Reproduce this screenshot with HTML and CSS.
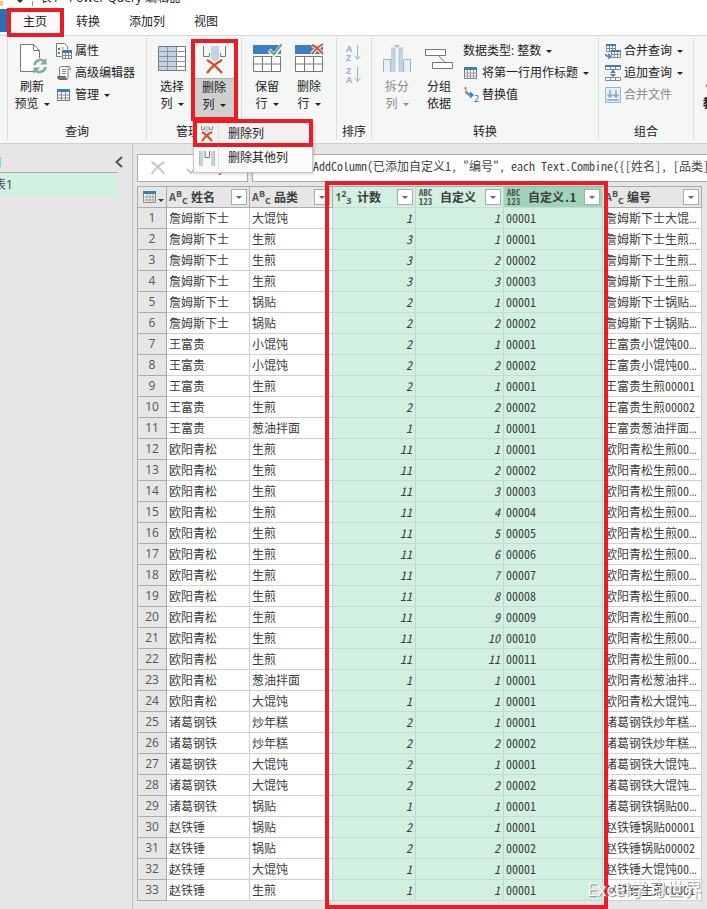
FILE: index.html
```html
<!DOCTYPE html>
<html lang="zh-CN">
<head>
    <meta charset="UTF-8">
    <meta name="viewport" content="width=device-width, initial-scale=1.0">
    <title>表1 - Power Query 编辑器</title>
    <link rel="stylesheet" href="styles.css">
</head>
<body>
    <header class="titlebar">
        <span class="title-icon"></span>
        <span class="title-caret"></span>
        <span class="title-sep"></span>
        <span class="title-text">表1 - Power Query 编辑器</span>
    </header>

    <nav class="tabs">
        <button class="tab-file" type="button" aria-label="文件"></button>
        <button class="tab tab-active" type="button">主页</button>
        <button class="tab" type="button">转换</button>
        <button class="tab" type="button">添加列</button>
        <button class="tab" type="button">视图</button>
    </nav>

    <div class="ribbon">
        <section class="group group-query">
            <div class="group-body">
                <button class="big big-wide" type="button">
                    <span class="big-icon"><svg width="30" height="32" viewBox="0 0 30 32"><path d="M3.500 2.500h13l6 6v21h-19z" fill="#fff" stroke="#777"/><path d="M16.500 2.500v6h6" fill="none" stroke="#777"/><circle cx="23" cy="24" r="8" fill="#f5f6f6"/><path d="M17.500 23a6 6 0 0 1 10-3.500M28.500 25a6 6 0 0 1-10 3.500" fill="none" stroke="#7fae9b" stroke-width="2.500"/><path d="M29.500 16v6.500h-6.500zM16.500 32v-6.500h6.500z" fill="#7fae9b"/></svg></span>
                    <span class="big-label">刷新<br>预览<i class="caret"></i></span>
                </button>
                <div class="stack">
                    <button class="small" type="button"><svg width="16" height="16" viewBox="0 0 16 16"><path d="M.5.500h8l3 3v3M.500.500v13h5" fill="#fff" stroke="#777"/><path d="M2 5h2v2H2zM2 9h2v2H2z" fill="#777"/><path d="M5 5h3" stroke="#999"/><path d="M6.500 7.500h9v8h-9z" fill="#fff" stroke="#777"/><path d="M6 7h10v3H6z" fill="#3c7fbf"/><path d="M9.500 10v6M12.500 10v6M6 12.500h10" stroke="#888"/></svg>属性</button>
                    <button class="small" type="button"><svg width="16" height="16" viewBox="0 0 16 16"><path d="M3.500 11V3.500q0-2 2-2h8q-1.500.500-1.500 2v9q0 2-2 2" fill="#fff" stroke="#777"/><path d="M12.500 1.500q2 0 2 3h-2" fill="#fff" stroke="#777"/><path d="M1.500 11.500h8q0 3 1.500 3h-7q-2.500 0-2.500-3z" fill="#777" stroke="#666"/><path d="M6 4.500h4M6 6.500h4M6 8.500h4" stroke="#888"/></svg>高级编辑器</button>
                    <button class="small" type="button"><svg width="16" height="16" viewBox="0 0 16 16"><path d="M1.500 2.500h12v11h-12z" fill="#fff" stroke="#777"/><path d="M1 2h13v3H1z" fill="#3c7fbf"/><path d="M5.500 5v9M9.500 5v9M1 8h13M1 11h13" stroke="#888"/></svg>管理<i class="caret"></i></button>
                </div>
            </div>
            <h2 class="group-name">查询</h2>
        </section>

        <section class="group group-columns">
            <div class="group-body">
                <button class="big" type="button">
                    <span class="big-icon"><svg width="30" height="32" viewBox="0 0 30 32"><path d="M1.500 4.500h27v24h-27z" fill="#fff" stroke="#777"/><path d="M2 5h17.500v23H2z" fill="#c3d3e6"/><path d="M10.500 5v24M19.500 5v24M1 9.500h28M1 14.500h28M1 19.500h28M1 24.500h28" stroke="#909090"/></svg></span>
                    <span class="big-label">选择<br>列<i class="caret"></i></span>
                </button>
                <div class="split">
                    <button class="big big-open" type="button">
                        <span class="big-icon"><svg width="30" height="32" viewBox="0 0 30 32"><path d="M12 4h8v13l-4 3-4-3z" fill="#c3d3e6"/><path d="M4.500 4v10.500h6V11M26.500 4v10.500h-5V11" fill="none" stroke="#777"/><path d="M8 18q6 3 15 13M23 18q-9 5-15 13" fill="none" stroke="#d4502a" stroke-width="2.500"/></svg></span>
                        <span class="big-label">删除<br>列<i class="caret"></i></span>
                    </button>
                    <div class="menu">
                        <button class="menu-item menu-item-marked" type="button"><span class="menu-icon"><svg width="16" height="18" viewBox="0 0 16 18"><path d="M6 1h4v6H6z" fill="#c3d3e6"/><path d="M2.500 1v3.500h3V2M13.500 1v3.500h-3V2" fill="none" stroke="#888"/><path d="M3 7q4 2 10 9M13 7q-6 3-10 9" fill="none" stroke="#d4502a" stroke-width="2"/></svg></span>删除列</button>
                        <button class="menu-item" type="button"><span class="menu-icon"><svg width="16" height="18" viewBox="0 0 16 18"><path d="M0 2h4v15H0zM12 2h4v15h-4z" fill="#c3d3e6"/><path d="M.5 2v15M15.500 2v15" stroke="#a9bdd6"/><path d="M6 2v6.500h4.500V2" fill="none" stroke="#777"/></svg></span>删除其他列</button>
                    </div>
                </div>
            </div>
            <h2 class="group-name">管理列</h2>
        </section>

        <section class="group group-rows">
            <div class="group-body">
                <button class="big" type="button">
                    <span class="big-icon"><svg width="30" height="32" viewBox="0 0 30 32"><path d="M1 3h28v9H1z" fill="#3c7fbf"/><path d="M1.500 14.500h27v15h-27z" fill="#fff" stroke="#777"/><path d="M10.500 14v16M19.500 14v16M1 22h28" stroke="#777"/><path d="M17 8l5 5 8-10" fill="none" stroke="#f5f6f6" stroke-width="4"/><path d="M17 8l5 4 8-10" fill="none" stroke="#6f9f8c" stroke-width="2"/></svg></span>
                    <span class="big-label">保留<br>行<i class="caret"></i></span>
                </button>
                <button class="big" type="button">
                    <span class="big-icon"><svg width="30" height="32" viewBox="0 0 30 32"><path d="M1 3h28v9H1z" fill="#3c7fbf"/><path d="M1.500 14.500h27v15h-27z" fill="#fff" stroke="#777"/><path d="M10.500 14v16M19.500 14v16M1 22h28" stroke="#777"/><path d="M18 3q5 2 11 9M29 2q-7 4-11 10" fill="none" stroke="#f5f6f6" stroke-width="4"/><path d="M18 3q5 2 11 9M29 2q-7 4-11 10" fill="none" stroke="#d4502a" stroke-width="2"/></svg></span>
                    <span class="big-label">删除<br>行<i class="caret"></i></span>
                </button>
            </div>
            <h2 class="group-name"></h2>
        </section>

        <section class="group group-sort">
            <div class="group-body">
                <div class="stack">
                    <button class="sort" type="button" aria-label="升序"><span>A<br>Z</span><svg width="7" height="16" viewBox="0 0 7 16"><path d="M3.500 0v14M.500 10.500l3 4 3-4" fill="none" stroke="#9fb0cb"/></svg></button>
                    <button class="sort" type="button" aria-label="降序"><span>Z<br>A</span><svg width="7" height="16" viewBox="0 0 7 16"><path d="M3.500 0v14M.500 10.500l3 4 3-4" fill="none" stroke="#9fb0cb"/></svg></button>
                </div>
            </div>
            <h2 class="group-name">排序</h2>
        </section>

        <section class="group group-transform">
            <div class="group-body">
                <button class="big" type="button" disabled>
                    <span class="big-icon"><svg width="30" height="32" viewBox="0 0 30 32"><path d="M1.500 30V17.500h7V30M28.500 30V17.500h-7V30" fill="#e4f1f8" stroke="#9db3cc"/><path d="M9 30V6h4v24M17 30V6h4v24" fill="#c3d3e6"/><path d="M9 6h4v24M17 30V6h4" fill="none" stroke="#b3c5dc"/><path d="M12 3h6l-3 3z" fill="#9db3cc"/></svg></span>
                    <span class="big-label">拆分<br>列<i class="caret"></i></span>
                </button>
                <button class="big" type="button">
                    <span class="big-icon"><svg width="30" height="32" viewBox="0 0 30 32"><path d="M1.500 7.500h20v6h-20zM8.500 20.500h20v6h-20z" fill="#fff" stroke="#777"/><path d="M14.500 14l6.500 6" stroke="#777"/></svg></span>
                    <span class="big-label">分组<br>依据</span>
                </button>
                <div class="stack">
                    <button class="small" type="button">数据类型: 整数<i class="caret"></i></button>
                    <button class="small" type="button"><svg width="16" height="16" viewBox="0 0 16 16"><path d="M1.500 2.500h12v11h-12z" fill="#fff" stroke="#777"/><path d="M1 2h13v3H1z" fill="#3c7fbf"/><path d="M4.500 5v9M7.500 5v9M10.500 5v9M1 8h13M1 11h13" stroke="#999"/></svg>将第一行用作标题<i class="caret"></i></button>
                    <button class="small" type="button"><span class="replace-icon"><sup>1</sup><svg width="9" height="8" viewBox="0 0 9 8"><path d="M1 0q0 4 6 4M4.500 1l3 3-3 3" fill="none" stroke="#3c7fbf" stroke-width="2"/></svg><sub>2</sub></span>替换值</button>
                </div>
            </div>
            <h2 class="group-name">转换</h2>
        </section>

        <section class="group group-combine">
            <div class="group-body">
                <div class="stack">
                    <button class="small" type="button"><svg width="16" height="16" viewBox="0 0 16 16"><path d="M1.500 1.500h9v7h-9z" fill="#fff" stroke="#888"/><path d="M1 1h10v2H1z" fill="#3c7fbf"/><path d="M4.500 3v6M7.500 3v6M1 5.500h10" stroke="#888"/><path d="M6.500 7.500h9v7h-9z" fill="#fff" stroke="#888"/><path d="M6 7h10v2H6z" fill="#3c7fbf"/><path d="M9.500 9v6M12.500 9v6M6 11.500h10" stroke="#888"/><path d="M.5 11q0 2.500 4.500 2.500M3 11l2.500 2.500L3 16" fill="none" stroke="#3c7fbf" stroke-width="1.500"/></svg>合并查询<i class="caret"></i></button>
                    <button class="small" type="button"><svg width="16" height="16" viewBox="0 0 16 16"><path d="M.5 1.500h15v3H.500zM.500 12.500h15v3H.500z" fill="#fff" stroke="#888"/><path d="M0 0h16v2H0z" fill="#3c7fbf"/><path d="M5.500 2v3M10.500 2v3M5.500 12v4M10.500 12v4" stroke="#888"/><path d="M8 5v2M8 9v2" stroke="#3c7fbf" stroke-width="2"/><path d="M5 8h6L8 5zM5 9h6l-3 3z" fill="#3c7fbf"/></svg>追加查询<i class="caret"></i></button>
                    <button class="small" type="button" disabled><svg width="16" height="16" viewBox="0 0 16 16"><path d="M.5.500h15v15H.500z" fill="#e4f1f8" stroke="#9db3cc"/><path d="M5 3v7M2.500 7.500L5 10l2.500-2.500M11 3v7M8.500 7.500L11 10l2.500-2.500M2 13h12" fill="none" stroke="#86a3c5" stroke-width="1.500"/></svg>合并文件</button>
                </div>
            </div>
            <h2 class="group-name">组合</h2>
        </section>

        <section class="group group-more">
            <div class="group-body">
                <button class="more" type="button"><span class="more-icon"></span>教</button>
            </div>
        </section>
    </div>

    <main class="workspace">
        <aside class="queries">
            <div class="queries-head">
                <span class="queries-mark"></span>
                <button class="collapse" type="button" aria-label="折叠"><svg width="8" height="12" viewBox="0 0 8 12"><path d="M7 1L1.500 6 7 11" fill="none" stroke="#555" stroke-width="2"/></svg></button>
            </div>
            <a class="query" href="#">表1</a>
        </aside>

        <div class="editor">
            <div class="formula">
                <div class="formula-tools">
                    <button type="button" aria-label="取消"><svg width="16" height="16" viewBox="0 0 16 16"><path d="M1.500 2Q7 5 14.500 14M14.500 2Q7 6 1.500 14" fill="none" stroke="#c8c8c8" stroke-width="2"/></svg></button>
                    <button type="button" aria-label="确认"><svg width="14" height="14" viewBox="0 0 14 14"><path d="M1 8l4 4L13 2" fill="none" stroke="#c8c8c8" stroke-width="2"/></svg></button>
                    <span class="fx">fx</span>
                </div>
                <input class="formula-input" type="text" aria-label="公式" value='= Table.AddColumn(已添加自定义1, "编号", each Text.Combine({[姓名], [品类], [自定义.1]}))'>
            </div>

            <div class="grid-wrap">
                <table class="grid">
                    <colgroup><col class="c-num"><col class="c-name"><col class="c-kind"><col class="c-count"><col class="c-custom"><col class="c-custom1"><col class="c-code"></colgroup>
                    <thead>
                        <tr>
                            <th class="corner"><div class="head"><svg width="14" height="13" viewBox="0 0 14 13"><path d="M.5.500h12v11H.500z" fill="#fff" stroke="#888"/><path d="M0 0h13v3H0z" fill="#3c7fbf"/><path d="M4 3v9M7 3v9M10 3v9M0 6h13M0 9h13" stroke="#999"/></svg><i class="caret"></i></div></th>
                            <th><div class="head"><span class="t-abc">A<sup>B</sup><sub>C</sub></span>姓名<button class="filter" type="button" aria-label="筛选"></button></div></th>
                            <th><div class="head"><span class="t-abc">A<sup>B</sup><sub>C</sub></span>品类<button class="filter" type="button" aria-label="筛选"></button></div></th>
                            <th class="sel"><div class="head"><span class="t-abc">1<sup>2</sup><sub>3</sub></span>计数<button class="filter" type="button" aria-label="筛选"></button></div></th>
                            <th class="sel any"><div class="head"><span class="t-any">ABC<br>123</span>自定义<button class="filter" type="button" aria-label="筛选"></button></div></th>
                            <th class="sel cur any"><div class="head"><span class="t-any">ABC<br>123</span>自定义.1<button class="filter" type="button" aria-label="筛选"></button></div></th>
                            <th><div class="head"><span class="t-abc">A<sup>B</sup><sub>C</sub></span>编号<button class="filter" type="button" aria-label="筛选"></button></div></th>
                        </tr>
                    </thead>
                    <tbody id="rows"></tbody>
                </table>
                <div class="grid-mark"></div>
                <div class="watermark">Excel学习世界</div>
            </div>
        </div>
    </main>

    <script src="script.js"></script>
</body>
</html>
```

FILE: styles.css
```css
*, *::before, *::after { box-sizing: border-box; }
body { margin: 0; height: 100vh; display: flex; flex-direction: column; overflow: hidden; background: #e6e6e6; color: #222; font: 12px/16px "Open Sans", "Noto Sans CJK SC", sans-serif; }
button { font: inherit; color: inherit; background: none; border: 0; padding: 0; margin: 0; text-align: left; white-space: nowrap; }
svg { display: block; flex: none; }
h2 { margin: 0; font: inherit; }

.titlebar { flex: none; display: flex; align-items: flex-end; height: 9px; padding-bottom: 3px; background: #fff; overflow: hidden; }
.title-icon { width: 3px; height: 5px; background: #f4c58a; }
.title-caret { margin-left: 14px; border: 3px solid transparent; border-top-color: #333; }
.title-sep { width: 1px; height: 5px; margin-left: 9px; background: #999; }
.title-text { margin-left: 7px; white-space: nowrap; }

.tabs { flex: none; display: flex; gap: 1px; height: 26px; background: #fff; }
.tab-file { width: 8px; height: 23px; background: #2a6fb8; }
.tab { position: relative; padding: 0 14px; }
.tab-active { background: #f8f8f8; }
.tab-active::after { content: ""; position: absolute; inset: -1px -3px -2px -2px; border: 4px solid #ed1c24; z-index: 3; }

.ribbon { flex: none; display: flex; height: 109px; padding: 2px 0 3px 7px; background: #f5f6f6; border-top: 1px solid #d6d6d6; border-bottom: 1px solid #d0d0d0; }
.group { flex: none; display: flex; flex-direction: column; border-left: 1px solid #dcdcdc; }
.group-body { display: flex; flex: 1; padding-top: 1px; }
.group-name { height: 20px; line-height: 24px; text-align: center; }
.group-query { width: 139px; }
.group-columns, .group-rows { width: 95px; }
.group-columns .group-body, .group-rows .group-body, .group-transform .group-body { padding-left: 4px; }
.group-sort { width: 35px; }
.group-sort .stack { padding: 3px 0 0 9px; }
.group-transform { width: 227px; }
.group-combine { width: 95px; }
.group-combine .group-body { padding-left: 6px; }
.group-more { flex: 1; overflow: hidden; }

.big { display: flex; flex-direction: column; width: 42px; height: 78px; }
.big-wide { width: 48px; }
.big-icon { display: flex; justify-content: center; height: 39px; padding-top: 3px; }
.big-label { flex: 1; text-align: center; line-height: 17px; }
.big:disabled, .small:disabled { color: #8a8a8a; }
.caret { display: inline-block; margin-left: 5px; border: 3px solid transparent; border-top-color: currentColor; border-bottom: 0; vertical-align: middle; }
.split { position: relative; z-index: 2; }
.split::after { content: ""; position: absolute; left: -2px; top: 0; width: 47px; height: 82px; border: 4px solid #ed1c24; }
.big-open .big-label { background: #cfcfcf; border-top: 1px solid #b0b0b0; }

.stack { display: flex; flex-direction: column; padding-top: 1px; }
.small { display: flex; align-items: center; gap: 3px; height: 22px; }
.small .caret { margin-left: 2px; }
.group-transform .small { padding-left: 3px; }
.replace-icon { display: flex; align-items: center; width: 16px; height: 18px; color: #555; font-size: 10px; line-height: 10px; }
.replace-icon sup { align-self: flex-start; width: 3px; font-size: 9px; }
.replace-icon svg { width: 8px; }
.replace-icon sub { align-self: flex-end; font-size: 9px; }
.sort { display: flex; align-items: center; gap: 2px; height: 22px; color: #9fb0cb; font-size: 9px; font-weight: bold; line-height: 9px; }
.more { display: flex; flex-direction: column; padding: 45px 0 0 9px; line-height: 17px; font-weight: bold; }
.more-icon { width: 6px; height: 3px; margin: 0 0 8px 3px; background: #e08a2c; }

.menu { position: absolute; top: 82px; left: 0; z-index: 1; display: flex; flex-direction: column; gap: 1px; width: 120px; padding-bottom: 3px; background: #fbfbfb; border: 1px solid #c6c6c6; box-shadow: 1px 1px 3px #0003; }
.menu-item { position: relative; display: flex; align-items: center; gap: 9px; width: 100%; height: 23px; }
.menu-icon { display: flex; align-items: center; width: 25px; height: 23px; padding-left: 5px; border-right: 1px solid #ddd; }
.menu-item-marked { background: #f1f1f1; }
.menu-item-marked::after { content: ""; position: absolute; inset: -3px -1px -2px -1px; border: 4px solid #ed1c24; }

.workspace { flex: 1; display: flex; min-height: 0; }
.queries { flex: none; width: 133px; border-right: 1px solid #bdbdbd; }
.queries-head { display: flex; align-items: center; justify-content: space-between; width: 118px; height: 29px; padding-top: 7px; border-bottom: 1px solid #ababab; }
.queries-mark { width: 1px; height: 10px; background: #63e3e0; }
.collapse { margin-right: -5px; }
.query { display: flex; align-items: center; width: 118px; height: 24px; text-indent: -6px; background: #d1f0e1; color: #444; text-decoration: none; overflow: hidden; }

.editor { flex: 1; min-width: 0; padding: 10px 0 0 4px; }
.formula { display: flex; gap: 4px; height: 28px; }
.formula-tools { flex: none; display: flex; align-items: center; gap: 20px; width: 111px; padding-left: 12px; background: #fff; border: 1px solid #ababab; }
.fx { color: #666; font-style: italic; }
.formula-input { flex: 1; min-width: 0; padding: 0 0 5px 12px; border: 1px solid #ababab; border-right: 0; border-radius: 0; background: #fff; color: #444; font: 12px "Noto Sans Mono CJK SC", "DejaVu Sans Mono", monospace; }

.grid-wrap { position: relative; margin-top: 4px; }
.grid { width: 565px; table-layout: fixed; border-collapse: separate; border-spacing: 0; color: #3c3c3c; font: 12px/16px "Noto Sans Mono CJK SC", "DejaVu Sans Mono", monospace; border-left: 1px solid #ababab; }
.c-num { width: 29px; }
.c-name, .c-kind, .c-count { width: 83px; }
.c-custom { width: 88px; }
.c-custom1, .c-code { width: 99px; }
.grid th, .grid td { padding: 0 0 0 2px; border-right: 1px solid #cfcfcf; border-bottom: 1px solid #cfcfcf; white-space: nowrap; overflow: hidden; }
.grid thead th { height: 22px; padding: 0 2px; background: #e6e6e6; border-color: #ababab; border-top: 1px solid #ababab; }
.grid thead .any { padding-left: 0; }
.grid td { height: 21px; background: #fff; }
/* 省略号取自单元格字体，文字字体在 span 上 */
.grid .code { font: 10px/16px "Open Sans", sans-serif; text-overflow: ellipsis; }
.code span { font: 12px/16px "Noto Sans Mono CJK SC", "DejaVu Sans Mono", monospace; }
.grid tbody th { height: 21px; padding: 0; background: #e6e6e6; border-color: #ababab; color: #555; font: 12px/16px "Open Sans", sans-serif; text-align: center; }
.grid .sel { background: #d1f0e1; border-right-color: #bcd9cb; border-bottom-color: #c8dcd2; }
.grid thead .cur { background: #9fd5b7; }
.grid .num { padding-right: 3px; text-align: right; font-style: italic; }
.head { display: flex; align-items: center; gap: 5px; height: 20px; }
.corner .head { gap: 1px; padding-left: 3px; }
.corner .caret { margin: 6px 0 0; }
.t-abc { flex: none; width: 17px; color: #555; font: bold 10px/16px "Open Sans", sans-serif; }
.t-abc sup, .t-abc sub { font-size: 9px; line-height: 0; }
.t-any { flex: none; width: 19px; color: #555; font: bold 9px/9px "Noto Sans Mono CJK SC", "DejaVu Sans Mono", monospace; }
.filter { position: relative; flex: none; display: flex; align-items: center; justify-content: center; width: 16px; height: 16px; margin-left: auto; background: #fff; border: 1px solid #ababab; }
.filter::before { content: ""; border: 3px solid transparent; border-top-color: #666; border-bottom: 0; }

.grid-mark { position: absolute; top: -5px; left: 188px; width: 283px; bottom: -8px; border: 4px solid #ed1c24; }
.watermark { position: absolute; left: 450px; bottom: 1px; color: #fff; font-size: 18px; line-height: 22px; white-space: nowrap; text-shadow: 1px 1px 1px #888; }
```

FILE: script.js
```js
// 姓名, 品类, 计数（每组的行数 = 计数）
const groups = [
    ['詹姆斯下士', '大馄饨', 1],
    ['詹姆斯下士', '生煎', 3],
    ['詹姆斯下士', '锅贴', 2],
    ['王富贵', '小馄饨', 2],
    ['王富贵', '生煎', 2],
    ['王富贵', '葱油拌面', 1],
    ['欧阳青松', '生煎', 11],
    ['欧阳青松', '葱油拌面', 1],
    ['欧阳青松', '大馄饨', 1],
    ['诸葛钢铁', '炒年糕', 2],
    ['诸葛钢铁', '大馄饨', 2],
    ['诸葛钢铁', '锅贴', 1],
    ['赵铁锤', '锅贴', 2],
    ['赵铁锤', '大馄饨', 1],
    ['赵铁锤', '生煎', 1]
];

let html = '';
let n = 0;
groups.forEach(([name, kind, count]) => {
    for (let i = 1; i <= count; i++) {
        const code = String(i).padStart(5, '0');
        n++;
        html += `<tr><th>${n}</th><td>${name}</td><td>${kind}</td>` +
            `<td class="sel num">${count}</td><td class="sel num">${i}</td><td class="sel">${code}</td>` +
            `<td class="code"><span>${name}${kind}${code}</span></td></tr>`;
    }
});
document.getElementById('rows').innerHTML = html;
```
